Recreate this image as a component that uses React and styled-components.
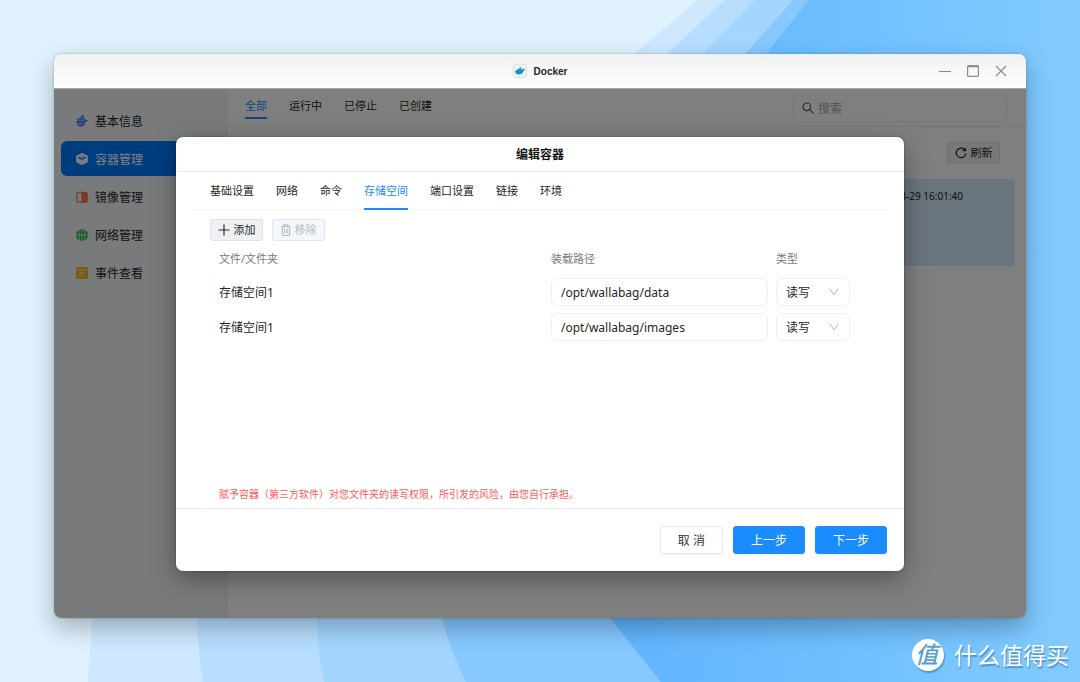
import * as React from "react"
import styled, { createGlobalStyle, css } from "styled-components"

const GlobalStyle = createGlobalStyle`
    * {
        box-sizing: border-box;
    }

    body {
        margin: 0;
        color: #262626;
        font-family: "Noto Sans", "Noto Sans CJK SC", sans-serif;
        font-size: 12px;
    }

    button, input, select {
        margin: 0;
        color: inherit;
        font-family: inherit;
        font-size: inherit;
    }

    svg {
        display: block;
        flex-shrink: 0;
    }
`

const Desktop = styled.div`
    position: relative;
    display: flex;
    min-height: 100vh;
    padding: 54px 54px 64px;
    background: #e0f2fe;
`

const WallpaperSvg = styled.svg`
    position: absolute;
    inset: 0;
    width: 100%;
    height: 100%;
`

const Window = styled.div`
    position: relative;
    display: flex;
    flex: 1;
    flex-direction: column;
    min-width: 0;
    border-radius: 7px;
    overflow: hidden;
`

const WindowFrame = styled.div`
    position: relative;
    display: flex;
    flex: 1;
    min-width: 0;
    border-radius: 7px;
    box-shadow: 0 10px 24px rgba(0, 0, 0, 0.28), 0 0 2px rgba(0, 0, 0, 0.3);
`

const TitleBar = styled.header`
    display: grid;
    grid-template-columns: 1fr auto 1fr;
    align-items: center;
    height: 35px;
    padding: 0 19px;
    border-bottom: 1px solid #a8a8a8;
    background: linear-gradient(#f1f1f1, #fefefe);
`

const AppTitle = styled.h1`
    display: flex;
    grid-column: 2;
    align-items: center;
    gap: 7px;
    margin: 0;
    font-family: "Liberation Sans", sans-serif;
    font-size: 10px;
    font-weight: bold;
`

const WindowControls = styled.div`
    display: flex;
    justify-content: flex-end;
    gap: 16px;
`

const ControlButton = styled.button`
    padding: 0;
    border: 0;
    background: none;
    color: #8c8c8c;
`

const Body = styled.div`
    position: relative;
    display: flex;
    flex: 1;
    background: #fff;
`

const Sidebar = styled.nav`
    display: flex;
    flex-direction: column;
    gap: 3px;
    width: 173px;
    padding: 14px 7px;
    background: #f0f4f8;
`

const NavItem = styled.a`
    display: flex;
    align-items: center;
    gap: 7px;
    height: 35px;
    padding: 0 15px;
    border-radius: 6px;
    color: #262626;
    text-decoration: none;

    ${({ $active }) => $active && css`
        background: #007bff;
        color: #fff;
    `}
`

const Main = styled.main`
    flex: 1;
    min-width: 0;
    border-left: 1px solid #f0f0f0;
`

const Toolbar = styled.div`
    display: flex;
    align-items: flex-start;
    justify-content: space-between;
    height: 38px;
    padding: 5px 18px 4px 17px;
    border-bottom: 1px solid #ededed;
`

const FilterTabs = styled.div`
    display: flex;
    gap: 22px;
`

const FilterTab = styled.button`
    height: 25px;
    padding: 0;
    border: 0;
    border-bottom: 2px solid ${({ $active }) => ($active ? "#1a8cff" : "transparent")};
    background: none;
    color: ${({ $active }) => ($active ? "#1a8cff" : "#262626")};
    font-size: 11px;
    line-height: 23px;
`

const SearchBox = styled.label`
    display: flex;
    align-items: center;
    gap: 4px;
    width: 216px;
    height: 28px;
    padding: 0 9px;
    border: 1px solid #f2f2f2;
    border-radius: 6px;
    color: #595959;
`

const SearchInput = styled.input`
    flex: 1;
    min-width: 0;
    padding: 0;
    border: 0;
    background: none;

    &::placeholder {
        color: #a5a5b2;
        opacity: 1;
    }
`

const ListHead = styled.div`
    display: flex;
    justify-content: flex-end;
    padding: 15px 26px;
`

const SmallButton = styled.button`
    display: flex;
    align-items: center;
    justify-content: center;
    gap: 4px;
    min-width: 53px;
    height: 22px;
    padding: 0 6px;
    border: 1px solid #e1e2e6;
    border-radius: 3px;
    background: #eff0f4;
    font-size: 11px;
    line-height: 20px;
    white-space: nowrap;

    &:disabled {
        border-color: #e3e7ec;
        background: #f4f8fc;
        color: #b5b9c9;
    }
`

const ContainerCard = styled.article`
    height: 87px;
    margin: 0 11px;
    padding: 10px 52px;
    border-radius: 4px;
    background: #d4e8fa;
    font-size: 10px;
    line-height: 14px;
    text-align: right;
`

const Overlay = styled.div`
    position: absolute;
    inset: 0;
    display: grid;
    place-items: center;
    background: rgba(0, 0, 0, 0.5);
`

const Dialog = styled.section`
    display: flex;
    flex-direction: column;
    width: 75%;
    max-width: 728px;
    min-height: 434px;
    border-radius: 7px;
    background: #fff;
    box-shadow: 0 8px 24px rgba(0, 0, 0, 0.35), 0 0 2px rgba(0, 0, 0, 0.4);
`

const DialogHeader = styled.h2`
    margin: 0;
    padding-top: 2px;
    border-bottom: 1px solid #ebebeb;
    color: #141414;
    font-size: 12px;
    font-weight: bold;
    line-height: 32px;
    text-align: center;
`

const DialogTabs = styled.div`
    display: flex;
    gap: 22px;
    height: 38px;
    margin: 0 17px;
    padding: 0 17px;
    box-shadow: inset 0 -1px #f3f3f3;
`

const DialogTab = styled(FilterTab)`
    height: 38px;
    padding-top: 2px;
    line-height: 34px;
`

const DialogBody = styled.div`
    display: flex;
    flex: 1;
    flex-direction: column;
    padding: 9px 17px 6px 34px;
`

const Actions = styled.div`
    display: flex;
    gap: 9px;
`

const VolumeTable = styled.table`
    width: 100%;
    table-layout: fixed;
    border-collapse: collapse;

    th {
        height: 34px;
        padding: 0;
        color: #7a7a7a;
        font-size: 11px;
        font-weight: normal;
        text-align: left;
    }

    th:nth-child(2) {
        width: 225px;
    }

    th:nth-child(3) {
        width: 111px;
    }

    td {
        padding: 3px 0 4px;
    }

    th:first-child, td:first-child {
        padding-left: 9px;
    }
`

const PathInput = styled.input`
    display: block;
    width: 217px;
    height: 28px;
    padding: 2px 9px 0;
    border: 1px solid #f1f1f1;
    border-radius: 6px;
    background: #fff;
`

const SelectBox = styled.div`
    position: relative;
    width: 74px;

    svg {
        position: absolute;
        top: 9px;
        right: 11px;
        pointer-events: none;
    }
`

const ModeSelect = styled.select`
    display: block;
    width: 100%;
    height: 28px;
    padding: 2px 9px 0;
    border: 1px solid #f1f1f1;
    border-radius: 6px;
    appearance: none;
    background: #fff;
`

const Warning = styled.p`
    margin: auto 0 0 9px;
    color: #ff5c5c;
    font-size: 10px;
    line-height: 16px;
`

const DialogFooter = styled.footer`
    display: flex;
    justify-content: flex-end;
    gap: 10px;
    padding: 17px;
    border-top: 1px solid #ebebeb;
`

const FooterButton = styled.button`
    height: 28px;
    padding: 2px 17px 0;
    border: 1px solid ${({ $primary }) => ($primary ? "#1a8cff" : "#ebebeb")};
    border-radius: 3px;
    background: ${({ $primary }) => ($primary ? "#1a8cff" : "#fff")};
    color: ${({ $primary }) => ($primary ? "#fff" : "#333")};
    box-shadow: 0 1px 1px rgba(0, 0, 0, 0.06);
    line-height: 24px;
`

const Brand = styled.div`
    position: absolute;
    right: 11px;
    bottom: 10px;
    display: flex;
    align-items: center;
    gap: 10px;
    color: #fff;
    font-size: 23px;
    line-height: 34px;
    text-shadow: 1px 2px 1px rgba(50, 110, 165, 0.6);
`

const BrandMark = styled.span`
    width: 32px;
    height: 32px;
    border-radius: 50%;
    background: #fff;
    box-shadow: 1px 2px 1px rgba(50, 110, 165, 0.5);
    color: #5a9fd0;
    font-size: 23px;
    font-style: italic;
    font-weight: 500;
    line-height: 30px;
    text-align: center;
    text-indent: -3px;
    text-shadow: none;
`

const Wallpaper = () => (
    <WallpaperSvg viewBox="0 0 1080 682" preserveAspectRatio="none" aria-hidden="true">
        <defs>
            <linearGradient id="deep" gradientUnits="userSpaceOnUse" x1="600" y1="0" x2="1080" y2="0">
                <stop offset="0" stopColor="#60b4fd" />
                <stop offset="0.5" stopColor="#6fbfff" />
                <stop offset="1" stopColor="#82cbff" />
            </linearGradient>
        </defs>
        <path fill="#cde8ff" d="M698 0 L634 54 C330 290 66 410 92 618 L88 682 H1080 V0Z" />
        <path fill="#b7deff" d="M725 0 L667 54 C420 270 184 420 197 618 Q198 652 203 682 H1080 V0Z" />
        <path fill="#a3d6ff" d="M755 0 L703 54 C500 270 300 420 317 618 Q318 652 324 682 H1080 V0Z" />
        <path fill="#86c8ff" d="M793 0 L745 54 C560 270 390 420 442 618 Q450 650 466 682 H1080 V0Z" />
        <path fill="url(#deep)" d="M809 0 L766 54 C600 270 490 440 610 618 L661 682 H1080 V0Z" />
    </WallpaperSvg>
)

const AppIcon = () => (
    <svg width="14" height="14" viewBox="0 0 14 14" aria-hidden="true">
        <rect x=".5" y=".5" width="13" height="13" rx="2.500" fill="#edf2f9" stroke="#dde2ea" />
        <path fill="#1494bc" d="M2 7h1.300V5.800h1.500V4.700h1.800V3.600h1.800v2.200h1.300c-.2-.7 0-1.300.4-1.700.5.4.7.9.7 1.400.6-.1 1.100 0 1.400.2-.3.8-.9 1.100-1.700 1.200C9.700 9.300 8.100 10.400 6 10.400 3.600 10.400 2.200 9.300 2 7z" />
    </svg>
)

const navIcons = {
    info: (
        <>
            <path fill="#4f7ff0" d="M.4 5.800h8.100c-.5-.9-.4-1.800.2-2.500.8.4 1.200 1 1.200 1.700.8-.2 1.500 0 2 .4-.4 1-1.200 1.400-2.300 1.400C9 9.900 7.500 11.700 4.800 11.700 1.800 11.700.2 9.200.4 5.800z" />
            <path fill="#4f7ff0" d="M1.200 3.500h2.100v1.900H1.200zM3.600 3.500h2.100v1.900H3.600zM6 3.500h1.900v1.900H6zM3.600 1.600h2.100v1.600H3.600zM6 .2h1.900v3H6z" />
            <path fill="none" stroke="#f0f4f8" strokeWidth=".8" d="M1.500 8.300c1.800.9 3.400.8 5-.4" />
        </>
    ),
    box: (
        <>
            <path fill="#fff" d="M6 0 11.800 2.700V9.200L6 12 .2 9.200V2.700z" />
            <path fill="#007bff" d="M2.200 4.200 6 2.700l3.800 1.500v.9L6 7 2.200 5.100z" />
            <path fill="#fff" d="M3.400 4 6 3l2.600 1L6 5.200z" />
        </>
    ),
    image: (
        <>
            <rect x=".9" y="1.500" width="10" height="9.500" rx="1" fill="none" stroke="#f37455" strokeWidth="1.200" />
            <path fill="#f37455" d="M6 .9h4.500a1 1 0 0 1 1 1v8.700a1 1 0 0 1-1 1H6z" />
            <path stroke="#f37455" strokeWidth="1.200" d="M6 0v12" />
        </>
    ),
    globe: (
        <>
            <circle cx="6" cy="6" r="6" fill="#29b936" />
            <path fill="none" stroke="#f0f4f8" strokeWidth=".8" d="M0 6h12M6 0v12M3.800.3c-1.200 3.600-1.200 7.800 0 11.400M8.200.3c1.200 3.600 1.200 7.800 0 11.400" />
        </>
    ),
    event: (
        <>
            <rect x="0" y="0" width="12" height="12" rx="1.500" fill="#f0b90f" />
            <path fill="none" stroke="#f0f4f8" d="M1.200 3h9.600M3 6.200h6M3 8.700h3.500" />
        </>
    ),
}

const navItems = [
    { icon: "info", label: "基本信息" },
    { icon: "box", label: "容器管理", active: true },
    { icon: "image", label: "镜像管理" },
    { icon: "globe", label: "网络管理" },
    { icon: "event", label: "事件查看" },
]

const filters = ["全部", "运行中", "已停止", "已创建"]
const dialogTabs = ["基础设置", "网络", "命令", "存储空间", "端口设置", "链接", "环境"]

const LineIcon = ({ d, size = 12, color = "currentColor" }) => (
    <svg width={size} height={size} viewBox="0 0 12 12" fill="none" stroke={color} strokeWidth="1.200" aria-hidden="true">
        <path d={d} />
    </svg>
)

const TrashIcon = () => (
    <svg width="10" height="12" viewBox="0 0 10 12" fill="none" stroke="currentColor" strokeWidth="1.200" aria-hidden="true">
        <path d="M.3 2.500h9.400M3 2.500V.8h4v1.700M1.400 2.500v8q0 1 1 1h5.200q1 0 1-1v-8M3.800 4.500v5M6.200 4.500v5" />
    </svg>
)

const VolumeRow = ({ volume, onChange }) => (
    <tr>
        <td>{volume.folder}</td>
        <td>
            <PathInput
                aria-label="装载路径"
                value={volume.path}
                onChange={(e) => onChange({ ...volume, path: e.target.value })}
            />
        </td>
        <td>
            <SelectBox>
                <ModeSelect
                    aria-label="类型"
                    value={volume.mode}
                    onChange={(e) => onChange({ ...volume, mode: e.target.value })}
                >
                    <option value="rw">读写</option>
                    <option value="ro">只读</option>
                </ModeSelect>
                <LineIcon d="M1 2 6 9.500 11 2" size={10} color="#b8b8b8" />
            </SelectBox>
        </td>
    </tr>
)

const EditDialog = () => {
    const [tab, setTab] = React.useState("存储空间")
    const [volumes, setVolumes] = React.useState([
        { id: 1, folder: "存储空间1", path: "/opt/wallabag/data", mode: "rw" },
        { id: 2, folder: "存储空间1", path: "/opt/wallabag/images", mode: "rw" },
    ])

    const update = (next) => setVolumes(volumes.map((v) => (v.id === next.id ? next : v)))

    return (
        <Dialog role="dialog" aria-labelledby="dialog-title">
            <DialogHeader id="dialog-title">编辑容器</DialogHeader>
            <DialogTabs role="tablist">
                {dialogTabs.map((name) => (
                    <DialogTab key={name} role="tab" aria-selected={name === tab} $active={name === tab} onClick={() => setTab(name)}>
                        {name}
                    </DialogTab>
                ))}
            </DialogTabs>
            <DialogBody>
                <Actions>
                    <SmallButton>
                        <LineIcon d="M6 .5v11M.5 6h11" />
                        添加
                    </SmallButton>
                    <SmallButton disabled>
                        <TrashIcon />
                        移除
                    </SmallButton>
                </Actions>
                <VolumeTable>
                    <thead>
                        <tr>
                            <th>文件/文件夹</th>
                            <th>装载路径</th>
                            <th>类型</th>
                        </tr>
                    </thead>
                    <tbody>
                        {volumes.map((v) => (
                            <VolumeRow key={v.id} volume={v} onChange={update} />
                        ))}
                    </tbody>
                </VolumeTable>
                <Warning>赋予容器（第三方软件）对您文件夹的读写权限，所引发的风险，由您自行承担。</Warning>
            </DialogBody>
            <DialogFooter>
                <FooterButton>取 消</FooterButton>
                <FooterButton $primary>上一步</FooterButton>
                <FooterButton $primary>下一步</FooterButton>
            </DialogFooter>
        </Dialog>
    )
}

const App = () => {
    const [filter, setFilter] = React.useState("全部")

    return (
        <Desktop>
            <GlobalStyle />
            <Wallpaper />
            <WindowFrame>
                <Window>
                    <TitleBar>
                        <AppTitle>
                            <AppIcon />
                            Docker
                        </AppTitle>
                        <WindowControls>
                            <ControlButton aria-label="最小化">
                                <LineIcon d="M0 6.500h12" />
                            </ControlButton>
                            <ControlButton aria-label="最大化">
                                <LineIcon d="M1.500.6h9q.9 0 .9.9v9q0 .9-.9.9h-9q-.9 0-.9-.9v-9q0-.9.9-.9zM.6 1.600h10.800" />
                            </ControlButton>
                            <ControlButton aria-label="关闭">
                                <LineIcon d="M1 1l10 10M11 1 1 11" />
                            </ControlButton>
                        </WindowControls>
                    </TitleBar>
                    <Body>
                        <Sidebar>
                            {navItems.map((item) => (
                                <NavItem key={item.icon} href="#" $active={item.active}>
                                    <svg width="12" height="12" viewBox="0 0 12 12" aria-hidden="true">
                                        {navIcons[item.icon]}
                                    </svg>
                                    {item.label}
                                </NavItem>
                            ))}
                        </Sidebar>
                        <Main>
                            <Toolbar>
                                <FilterTabs>
                                    {filters.map((name) => (
                                        <FilterTab key={name} $active={name === filter} onClick={() => setFilter(name)}>
                                            {name}
                                        </FilterTab>
                                    ))}
                                </FilterTabs>
                                <SearchBox>
                                    <LineIcon d="M8.600 4.800a3.800 3.800 0 1 1-7.600 0 3.800 3.800 0 0 1 7.600 0zM7.800 7.600l3.700 3.700" />
                                    <SearchInput type="search" placeholder="搜索" aria-label="搜索" />
                                </SearchBox>
                            </Toolbar>
                            <ListHead>
                                <SmallButton>
                                    <LineIcon d="M9.900 3A4.800 4.800 0 1 0 10.800 6.500M10.500.8v2.800H7.700" />
                                    刷新
                                </SmallButton>
                            </ListHead>
                            <ContainerCard>
                                <time>2023-03-29 16:01:40</time>
                            </ContainerCard>
                        </Main>
                        <Overlay>
                            <EditDialog />
                        </Overlay>
                    </Body>
                </Window>
            </WindowFrame>
            <Brand>
                <BrandMark>值</BrandMark>
                什么值得买
            </Brand>
        </Desktop>
    )
}

export default App
